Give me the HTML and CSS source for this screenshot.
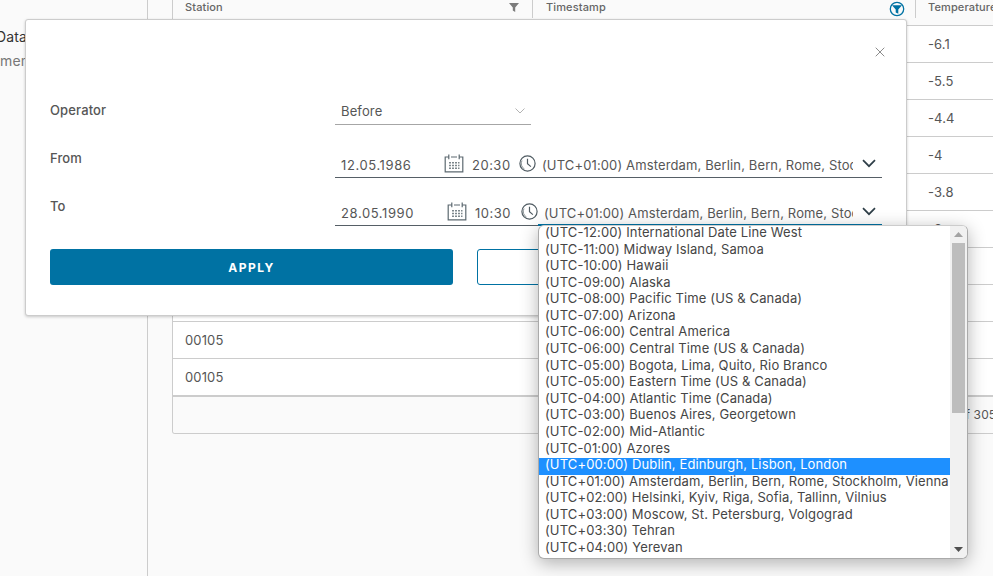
FILE: index.html
```html
<!DOCTYPE html>
<html>
<head>
    <meta charset="UTF-8">
    <meta name="viewport" content="width=device-width, initial-scale=1.0">
    <title>Data</title>
    <link rel="stylesheet" href="styles.css">
</head>

<body>

    <div class="page">
        <div class="sidebar">
            <div class="sidebar-title">Data</div>
            <div class="sidebar-sub">ments</div>
        </div>
        <div class="content">
            <div class="grid">
                <div class="grid-head">
                    <div class="col col-station">
                        <span>Station</span>
                        <svg class="filter-icon" width="12" height="12" viewBox="0 0 12 12"><path d="M1 2h10L7.2 6.400V11L4.800 9.600V6.400z" fill="#7b7b7b"/></svg>
                    </div>
                    <div class="col col-time">
                        <span>Timestamp</span>
                        <svg class="filter-icon" width="16" height="16" viewBox="0 0 16 16"><circle cx="8" cy="8" r="6.700" fill="none" stroke="#0072a3" stroke-width="1.300"/><path d="M3 4.200h10L9.300 8.400v4.400L6.700 11.400v-3z" fill="#0072a3"/></svg>
                    </div>
                    <div class="col col-temp"><span>Temperature</span></div>
                </div>
                <div class="grid-row"><div class="col col-station"></div><div class="col col-time"></div><div class="col col-temp">-6.1</div></div>
                <div class="grid-row"><div class="col col-station"></div><div class="col col-time"></div><div class="col col-temp">-5.5</div></div>
                <div class="grid-row"><div class="col col-station"></div><div class="col col-time"></div><div class="col col-temp">-4.4</div></div>
                <div class="grid-row"><div class="col col-station"></div><div class="col col-time"></div><div class="col col-temp">-4</div></div>
                <div class="grid-row"><div class="col col-station"></div><div class="col col-time"></div><div class="col col-temp">-3.8</div></div>
                <div class="grid-row"><div class="col col-station"></div><div class="col col-time"></div><div class="col col-temp">-3</div></div>
                <div class="grid-row"><div class="col col-station"></div><div class="col col-time"></div><div class="col col-temp"></div></div>
                <div class="grid-row"><div class="col col-station"></div><div class="col col-time"></div><div class="col col-temp"></div></div>
                <div class="grid-row"><div class="col col-station">00105</div><div class="col col-time"></div><div class="col col-temp"></div></div>
                <div class="grid-row grid-row-last"><div class="col col-station">00105</div><div class="col col-time"></div><div class="col col-temp"></div></div>
                <div class="grid-foot">of 3050</div>
            </div>
        </div>
    </div>

    <div class="modal">
        <button class="modal-close" aria-label="Close">
            <svg width="10" height="10" viewBox="0 0 10 10"><path d="M.7.7l8.600 8.600M9.300.7L.7 9.300" stroke="#8c8c8c" fill="none"/></svg>
        </button>
        <div class="form">
            <label class="form-label">Operator</label>
            <div class="field field-operator">
                <span>Before</span>
                <svg width="10" height="6" viewBox="0 0 10 6"><path d="M.5.5L5 5 9.500.5" stroke="#b3b3b3" fill="none"/></svg>
            </div>

            <label class="form-label">From</label>
            <div class="field field-range field-from">
                <span class="field-date">12.05.1986</span>
                <svg class="cal-icon" width="20" height="19" viewBox="0 0 20 19"><use href="#calendar"/></svg>
                <span class="field-time">20:30</span>
                <svg class="clock-icon" width="17" height="17" viewBox="0 0 17 17"><use href="#clock"/></svg>
                <span class="field-zone">(UTC+01:00) Amsterdam, Berlin, Bern, Rome, Stockholm, Vienna</span>
                <svg class="zone-arrow" width="14" height="9" viewBox="0 0 14 9"><path d="M1 1.200l6 6 6-6" stroke="#2f3f48" stroke-width="1.700" fill="none"/></svg>
            </div>

            <label class="form-label">To</label>
            <div class="field field-range field-to">
                <span class="field-date">28.05.1990</span>
                <svg class="cal-icon" width="20" height="19" viewBox="0 0 20 19"><use href="#calendar"/></svg>
                <span class="field-time">10:30</span>
                <svg class="clock-icon" width="17" height="17" viewBox="0 0 17 17"><use href="#clock"/></svg>
                <span class="field-zone">(UTC+01:00) Amsterdam, Berlin, Bern, Rome, Stockholm, Vienna</span>
                <svg class="zone-arrow" width="14" height="9" viewBox="0 0 14 9"><path d="M1 1.200l6 6 6-6" stroke="#2f3f48" stroke-width="1.700" fill="none"/></svg>
            </div>
        </div>
        <div class="modal-buttons">
            <button class="btn btn-primary">APPLY</button>
            <button class="btn btn-outline" aria-label="Cancel"></button>
        </div>
    </div>

    <div class="zone-list">
        <div class="zone-options">
            <div class="zone-option">(UTC-12:00) International Date Line West</div>
            <div class="zone-option">(UTC-11:00) Midway Island, Samoa</div>
            <div class="zone-option">(UTC-10:00) Hawaii</div>
            <div class="zone-option">(UTC-09:00) Alaska</div>
            <div class="zone-option">(UTC-08:00) Pacific Time (US &amp; Canada)</div>
            <div class="zone-option">(UTC-07:00) Arizona</div>
            <div class="zone-option">(UTC-06:00) Central America</div>
            <div class="zone-option">(UTC-06:00) Central Time (US &amp; Canada)</div>
            <div class="zone-option">(UTC-05:00) Bogota, Lima, Quito, Rio Branco</div>
            <div class="zone-option">(UTC-05:00) Eastern Time (US &amp; Canada)</div>
            <div class="zone-option">(UTC-04:00) Atlantic Time (Canada)</div>
            <div class="zone-option">(UTC-03:00) Buenos Aires, Georgetown</div>
            <div class="zone-option">(UTC-02:00) Mid-Atlantic</div>
            <div class="zone-option">(UTC-01:00) Azores</div>
            <div class="zone-option zone-selected">(UTC+00:00) Dublin, Edinburgh, Lisbon, London</div>
            <div class="zone-option">(UTC+01:00) Amsterdam, Berlin, Bern, Rome, Stockholm, Vienna</div>
            <div class="zone-option">(UTC+02:00) Helsinki, Kyiv, Riga, Sofia, Tallinn, Vilnius</div>
            <div class="zone-option">(UTC+03:00) Moscow, St. Petersburg, Volgograd</div>
            <div class="zone-option">(UTC+03:30) Tehran</div>
            <div class="zone-option">(UTC+04:00) Yerevan</div>
        </div>
        <div class="zone-scroll">
            <svg width="9" height="5" viewBox="0 0 9 5"><path d="M4.500 0L9 5H0z" fill="#a3a3a3"/></svg>
            <div class="zone-thumb"></div>
            <svg class="zone-down" width="9" height="5" viewBox="0 0 9 5"><path d="M0 0h9L4.500 5z" fill="#505050"/></svg>
        </div>
    </div>

    <svg class="icon-defs" width="0" height="0">
        <symbol id="calendar" viewBox="0 0 20 19">
            <path d="M4.500 3H1.200v14.800h17.600V3h-3.300M7 3h6M4.800.6v4.600M15.200.6v4.600" fill="none" stroke="#5c6970" stroke-width="1.200"/>
            <path d="M5 8h2v1.500H5zM8 8h2v1.500H8zM11 8h2v1.500h-2zM14 8h1.500v1.500H14zM5 10.800h2v1.500H5zM8 10.800h2v1.500H8zM11 10.800h2v1.500h-2zM14 10.800h1.500v1.500H14zM5 13.500h2v1.500H5zM8 13.500h2v1.500H8zM11 13.500h2v1.500h-2zM14 13.500h1.500v1.500H14z" fill="#7d878c"/>
        </symbol>
        <symbol id="clock" viewBox="0 0 17 17">
            <circle cx="8.500" cy="8.500" r="7.600" fill="none" stroke="#4f5b62" stroke-width="1.200"/>
            <path d="M3 5.500A6.300 6.300 0 0 0 5.500 14" fill="none" stroke="#8a9397"/>
            <path d="M8.500 3.800v5l3.400 2.800" fill="none" stroke="#4f5b62" stroke-width="1.200"/>
        </symbol>
    </svg>

</body>

</html>
```

FILE: styles.css
```css
body {
    margin: 0;
    height: 576px;
    overflow: hidden;
    font-family: Inter, "Noto Sans", sans-serif;
    font-size: 13px;
    letter-spacing: 0.13px;
    color: #565656;
    background-color: #fafafa;
}

.page {
    display: flex;
    height: 576px;
}

.sidebar {
    width: 147px;
    flex-shrink: 0;
    padding-top: 28px;
    border-right: 1px solid #ccc;
    overflow: hidden;
}

.sidebar-title {
    margin-left: -4px;
    font-size: 14px;
    line-height: 18px;
    color: #333;
}

.sidebar-sub {
    margin-top: 6px;
    font-size: 14px;
    line-height: 18px;
    color: #777;
}

.content {
    flex: 1;
    padding-left: 24px;
    overflow: hidden;
}

.grid {
    width: 860px;
    border: 1px solid #ccc;
    border-top: none;
    border-radius: 0 0 3px 3px;
    background-color: #fff;
}

.grid-head,
.grid-row {
    display: flex;
}

.grid-head {
    height: 25px;
    background-color: #fafafa;
    border-bottom: 1px solid #ccc;
    font-size: 11px;
    font-weight: 500;
    color: #666;
}

.grid-row {
    height: 36px;
    border-bottom: 1px solid #ccc;
    align-items: center;
}

.grid-row-last {
    border-bottom-width: 2px;
}

.col {
    box-sizing: border-box;
    padding-left: 12px;
}

.col-station {
    width: 360px;
}

.col-time {
    width: 383px;
    padding-left: 13px;
}

.col-temp {
    flex: 1;
}

.grid-head .col {
    display: flex;
    justify-content: space-between;
    height: 18px;
    padding-right: 10px;
    line-height: 14px;
    border-right: 1px solid #ccc;
}

.grid-head .col-station {
    padding-right: 12px;
}

.grid-head .col-temp {
    border-right: none;
}

.filter-icon {
    margin-top: 1px;
}

.grid-foot {
    height: 36px;
    padding-right: 29px;
    line-height: 36px;
    text-align: right;
    background-color: #fafafa;
    font-size: 12px;
    border-radius: 0 0 3px 3px;
}

/* filter popup */
.modal {
    position: absolute;
    top: 19px;
    left: 25px;
    box-sizing: border-box;
    width: 882px;
    height: 297px;
    padding: 80px 24px 0;
    background-color: #fff;
    border: 1px solid #ccc;
    border-radius: 3px;
    box-shadow: 0 1px 3px rgba(0, 0, 0, 0.2);
}

.modal-close {
    position: absolute;
    top: 27px;
    right: 21px;
    padding: 0;
    border: none;
    background: none;
    line-height: 0;
}

.form {
    display: grid;
    grid-template-columns: 285px 1fr;
    grid-template-rows: 30px 30px 30px;
    row-gap: 18px;
}

.form-label {
    font-weight: 500;
    line-height: 20px;
}

.field {
    display: flex;
    align-items: center;
    box-sizing: border-box;
    padding: 0 6px;
    border-bottom: 1px solid #565f66;
}

.field-operator {
    width: 196px;
    height: 25px;
    padding-bottom: 2px;
    justify-content: space-between;
    border-bottom-color: #a6a6a6;
}

.field-range {
    position: relative;
    padding-top: 5px;
}

.field-date {
    width: 103px;
    letter-spacing: 0.6px;
}

.field-to .field-date {
    width: 106px;
}

.field-time {
    width: 47px;
    margin-left: 8px;
    letter-spacing: 0.5px;
}

.field-to .field-time {
    width: 46px;
}

.cal-icon,
.clock-icon {
    flex-shrink: 0;
    margin-bottom: 4px;
}

.field-zone {
    width: 311px;
    margin-left: 6px;
    white-space: nowrap;
    overflow: hidden;
}

.field-to .field-zone {
    width: 309px;
}

.zone-arrow {
    flex-shrink: 0;
    margin-left: auto;
    margin-bottom: 4px;
}

/* focused timezone select */
.field-to::after {
    content: "";
    position: absolute;
    left: 203px;
    right: 0;
    bottom: -1px;
    height: 2px;
    background-color: #0072a3;
}

.modal-buttons {
    display: flex;
    gap: 24px;
    margin-top: 23px;
}

.btn {
    flex: 1;
    height: 36px;
    border-radius: 3px;
    font-family: inherit;
    font-size: 12px;
    font-weight: 700;
    letter-spacing: 1.5px;
}

.btn-primary {
    border: none;
    background-color: #0072a3;
    color: #fff;
}

.btn-outline {
    border: 1px solid #0072a3;
    background-color: #fff;
    color: #0072a3;
}

/* open timezone list */
.zone-list {
    position: absolute;
    top: 225px;
    left: 538px;
    display: flex;
    box-sizing: border-box;
    width: 430px;
    height: 334px;
    background-color: #fff;
    border: 1px solid #aaa;
    border-top-color: #ccc;
    border-radius: 6px;
    box-shadow: 0 4px 18px rgba(0, 0, 0, 0.3);
    overflow: hidden;
}

.zone-options {
    flex: 1;
    min-width: 0;
    overflow: hidden;
}

/* text sits high in its row, first row is cut by the list top */
.zone-option {
    height: 16.58px;
    padding-left: 6px;
    line-height: 12.5px;
    white-space: nowrap;
    color: #454545;
}

.zone-selected {
    background-color: #1e90ff;
    color: #fff;
}

.zone-scroll {
    display: flex;
    flex-direction: column;
    align-items: center;
    box-sizing: border-box;
    width: 17px;
    padding-top: 6px;
    background-color: #f1f1f1;
}

.zone-thumb {
    width: 13px;
    height: 170px;
    margin-top: 6px;
    background-color: #bdbdbd;
}

.zone-down {
    margin-top: auto;
    margin-bottom: 6px;
}

.icon-defs {
    position: absolute;
}
```
